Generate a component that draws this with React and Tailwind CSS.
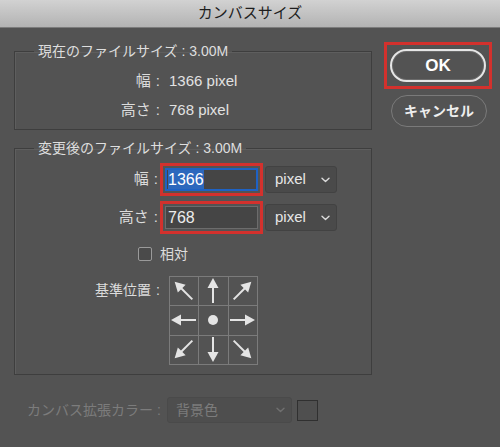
import React from "react";

const FONT = "font-['Liberation_Sans','Noto_Sans_CJK_JP',sans-serif]";

function Chevron({ color = "#dcdcdc" }) {
  return (
    <svg width="9" height="6" viewBox="0 0 9 6">
      <path d="M1 1.2l3.5 3.3 3.5-3.3" fill="none" stroke={color} strokeWidth="1.4" strokeLinecap="round" strokeLinejoin="round" />
    </svg>
  );
}

function Arrow({ cx, cy, rot }) {
  return (
    <g transform={`translate(${cx} ${cy}) rotate(${rot})`} fill="#e4e4e4">
      <path d="M0 -12.5 L5.5 -2.5 L-5.5 -2.5 Z" />
      <rect x="-1" y="-4" width="2" height="16.5" />
    </g>
  );
}

function AnchorGrid() {
  const c = [14.5, 44, 73.5];
  return (
    <svg width="89" height="89" viewBox="0 0 89 89">
      <g stroke="#7b7b7b" strokeWidth="1" fill="none">
        <rect x="0.5" y="0.5" width="88" height="88" />
        <line x1="29.5" y1="0" x2="29.5" y2="89" />
        <line x1="59.5" y1="0" x2="59.5" y2="89" />
        <line x1="0" y1="29.5" x2="89" y2="29.5" />
        <line x1="0" y1="59.5" x2="89" y2="59.5" />
      </g>
      <Arrow cx={c[0]} cy={c[0]} rot={-45} />
      <Arrow cx={c[1]} cy={c[0]} rot={0} />
      <Arrow cx={c[2]} cy={c[0]} rot={45} />
      <Arrow cx={c[0]} cy={c[1]} rot={-90} />
      <circle cx={c[1]} cy={c[1]} r="5" fill="#e4e4e4" />
      <Arrow cx={c[2]} cy={c[1]} rot={90} />
      <Arrow cx={c[0]} cy={c[2]} rot={-135} />
      <Arrow cx={c[1]} cy={c[2]} rot={180} />
      <Arrow cx={c[2]} cy={c[2]} rot={135} />
    </svg>
  );
}

function Label({ children, w }) {
  return (
    <div className={`${w} flex items-center justify-end`}>
      <span>{children}</span>
      <span className="ml-[5px]">:</span>
    </div>
  );
}

function UnitSelect() {
  return (
    <div className="ml-[2px] flex h-[27px] w-[72px] items-center justify-between rounded-[3px] border border-[#424242] bg-[#4a4a4a] pl-[9px] pr-[6px] text-[15px] text-[#e6e6e6]">
      <span>pixel</span>
      <Chevron />
    </div>
  );
}

export default function App() {
  return (
    <div className={`${FONT} h-[447px] w-[500px] overflow-hidden bg-[#535353] text-[#dcdcdc]`}>
      {/* title bar */}
      <div className="flex h-[28px] items-center justify-center border-b border-[#7c7c7c] bg-gradient-to-b from-[#d2d2d2] to-[#b3b3b3] text-[15px] text-[#1e1e1e]">
        カンバスサイズ
      </div>

      <div className="flex">
        {/* left column */}
        <div className="w-[372px] pl-[14px] pt-[13px]">
          <fieldset className="border border-[#3e3e3e] shadow-[inset_1px_1px_0_#5e5e5e] pb-[4px]">
            <legend className="ml-[19px] px-[4px] text-[14px] leading-[20px] text-[#dedede]">
              現在のファイルサイズ : 3.00M
            </legend>
            <div className="mt-[6px] flex h-[29px] items-center text-[15px]">
              <Label w="w-[145px]">幅</Label>
              <div className="ml-[9px] text-[#e2e2e2]">1366 pixel</div>
            </div>
            <div className="flex h-[29px] items-center text-[15px]">
              <Label w="w-[145px]">高さ</Label>
              <div className="ml-[9px] text-[#e2e2e2]">768 pixel</div>
            </div>
          </fieldset>

          <fieldset className="mt-[8px] border border-[#3e3e3e] shadow-[inset_1px_1px_0_#5e5e5e] pb-[9px]">
            <legend className="ml-[19px] px-[4px] text-[14px] leading-[20px] text-[#dedede]">
              変更後のファイルサイズ : 3.00M
            </legend>
            <div className="mt-[5px] flex items-center text-[15px]">
              <Label w="w-[143px]">幅</Label>
              <div className="ml-[2px] h-[33px] w-[103px] border-[3px] border-[#d3312d] p-[2px]">
                <div className="flex h-[23px] items-center border-2 border-[#1e62c4] bg-[#454545] pl-[1px]">
                  <span className="bg-[#2c68bd] text-[16px] leading-[19px] text-white">1366</span>
                </div>
              </div>
              <UnitSelect />
            </div>
            <div className="mt-[5px] flex items-center text-[15px]">
              <Label w="w-[143px]">高さ</Label>
              <div className="ml-[2px] h-[33px] w-[103px] border-[3px] border-[#d3312d] p-[2px]">
                <div className="flex h-[23px] items-center border border-[#6c6c6c] bg-[#454545] pl-[2px] text-[16px] text-[#ececec]">
                  768
                </div>
              </div>
              <UnitSelect />
            </div>
            <div className="mt-[13px] flex items-center pl-[123px] text-[14px]">
              <div className="h-[14px] w-[14px] rounded-[2px] border border-[#9a9a9a] bg-[#4a4a4a]" />
              <span className="ml-[8px] leading-[14px]">相対</span>
            </div>
            <div className="mt-[15px] flex items-start text-[14px]">
              <div className="flex h-[29px] items-center">
                <Label w="w-[145px]">基準位置</Label>
              </div>
              <div className="ml-[9px]">
                <AnchorGrid />
              </div>
            </div>
          </fieldset>
        </div>

        {/* right column */}
        <div className="ml-[12px] pt-[14px]">
          <div className="h-[47px] w-[108px] border-[3px] border-[#d3312d] px-[3px] py-[4px]">
            <div className="flex h-[33px] items-center justify-center rounded-full border-2 border-[#e6e6e6] bg-[#535353] text-[17px] font-bold text-white shadow-[inset_0_0_0_1px_#6a6a6a]">
              OK
            </div>
          </div>
          <div className="ml-[7px] mt-[6px] flex h-[32px] w-[96px] items-center justify-center rounded-full border-[1.5px] border-[#7a7a7a] text-[14px] font-bold text-[#eeeeee]">
            キャンセル
          </div>
        </div>
      </div>

      {/* bottom row */}
      <div className="mt-[22px] flex items-center pl-[27px] text-[14px] text-[#7c7c7c]">
        <div className="w-[140px]">カンバス拡張カラー :</div>
        <div className="flex h-[26px] w-[125px] items-center justify-between rounded-[3px] border border-[#4a4a4a] bg-[#4e4e4e] pl-[8px] pr-[6px]">
          <span>背景色</span>
          <Chevron color="#707070" />
        </div>
        <div className="ml-[5px] h-[21px] w-[21px] border border-[#303030] bg-[#4f4f4f]" />
      </div>
    </div>
  );
}
